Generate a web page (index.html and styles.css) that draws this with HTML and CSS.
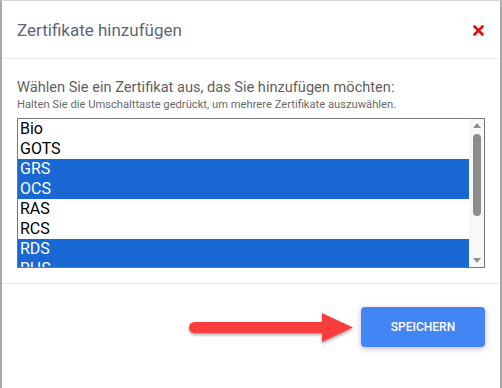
FILE: index.html
```html
<!DOCTYPE html>
<html lang="de">
<head>
    <meta charset="UTF-8">
    <title>Zertifikate hinzufügen</title>
    <link rel="stylesheet" href="styles.css">
</head>
<body>
    <div class="modal">
        <!-- Kopfzeile -->
        <div class="modal-header">
            <h3>Zertifikate hinzufügen</h3>
            <svg class="close" width="11" height="11" viewBox="0 0 11 11">
                <path d="M1.5 1.5 L9.5 9.5 M9.5 1.5 L1.5 9.5" stroke="#e8090c" stroke-width="2.6" stroke-linecap="round"/>
            </svg>
        </div>

        <div class="modal-body">
            <p class="hint">Wählen Sie ein Zertifikat aus, das Sie hinzufügen möchten:</p>
            <p class="hint-small">Halten Sie die Umschalttaste gedrückt, um mehrere Zertifikate auszuwählen.</p>
            <div class="cert-select">
                <div class="cert-list">
                    <div class="opt">Bio</div>
                    <div class="opt">GOTS</div>
                    <div class="opt selected">GRS</div>
                    <div class="opt selected">OCS</div>
                    <div class="opt">RAS</div>
                    <div class="opt">RCS</div>
                    <div class="opt selected">RDS</div>
                    <div class="opt selected">RHS</div>
                </div>
                <!-- Scrollleiste -->
                <div class="scrollbar">
                    <span class="arrow-up"></span>
                    <span class="thumb"></span>
                    <span class="arrow-down"></span>
                </div>
            </div>
        </div>

        <div class="modal-footer">
            <svg class="arrow" width="170" height="40" viewBox="0 0 170 40">
                <defs>
                    <filter id="sh" x="-10%" y="-30%" width="120%" height="160%">
                        <feDropShadow dx="0" dy="2" stdDeviation="1.5" flood-color="#000" flood-opacity="0.35"/>
                    </filter>
                </defs>
                <g filter="url(#sh)">
                    <rect x="2" y="14" width="140" height="11" rx="5.5" fill="#f73d3d"/>
                    <polygon points="135,5 166,19.5 135,34" fill="#f73d3d"/>
                </g>
            </svg>
            <button class="btn-save">SPEICHERN</button>
        </div>
    </div>
</body>
</html>
```

FILE: styles.css
```css
body {
    margin: 0;
    padding: 0;
    background: #fff;
    font-family: Roboto, "Liberation Sans", sans-serif;
}

.modal {
    height: 387px;
    border-top: 1px solid #d4d4d4;
    border-left: 2px solid #a9a9a9;
    border-right: 2px solid #a9a9a9;
    background: #fff;
}

.modal-header {
    display: flex;
    justify-content: space-between;
    align-items: center;
    height: 57px;
    padding: 0 15px;
    border-bottom: 1px solid #e9ecef;
}

.modal-header h3 {
    margin: 0;
    font-size: 17px;
    font-weight: 400;
    color: #5f6673;
}

.close {
    display: block;
    margin-right: 1px;
    margin-top: 2px;
}

.modal-body {
    padding: 18px 15px 15px;
    border-bottom: 1px solid #e9ecef;
}

.hint {
    margin: 0;
    font-size: 14.6px;
    color: #5f5f5f;
    line-height: 20px;
}

.hint-small {
    margin: 1px 0 6px;
    font-size: 11.2px;
    color: #6a6a6a;
    line-height: 14px;
}

.cert-select {
    display: flex;
    width: 466px;
    height: 148px;
    border: 1px solid #767676;
    overflow: hidden;
}

.cert-list {
    flex: 1;
    overflow: hidden;
}

.opt {
    height: 20px;
    line-height: 20px;
    padding-left: 2px;
    font-size: 16px;
    color: #000;
}

.opt.selected {
    background: #1967d2;
    color: #fff;
}

.scrollbar {
    width: 15px;
    background: #f8f8f8;
    display: flex;
    flex-direction: column;
    align-items: center;
    padding: 4px 0;
    box-sizing: border-box;
}

.arrow-up,
.arrow-down {
    width: 0;
    height: 0;
    border-left: 4.5px solid transparent;
    border-right: 4.5px solid transparent;
}

.arrow-up {
    border-bottom: 5px solid #909090;
}

.arrow-down {
    margin-top: auto;
    border-top: 5px solid #909090;
}

.thumb {
    width: 8px;
    height: 82px;
    margin-top: 6px;
    border-radius: 4px;
    background: #8c8c8c;
}

.modal-footer {
    display: flex;
    justify-content: flex-end;
    align-items: center;
    padding: 22px 15px 0;
    gap: 4px;
}

.arrow {
    display: block;
    margin-top: 2px;
}

.btn-save {
    width: 124px;
    height: 40px;
    border: none;
    border-radius: 4px;
    background: #4285f4;
    color: #fff;
    font-family: Roboto, "Liberation Sans", sans-serif;
    font-size: 12px;
    font-weight: 500;
    box-shadow: 0 2px 5px rgba(0, 0, 0, 0.16), 0 2px 8px rgba(140, 60, 200, 0.15);
}
```
